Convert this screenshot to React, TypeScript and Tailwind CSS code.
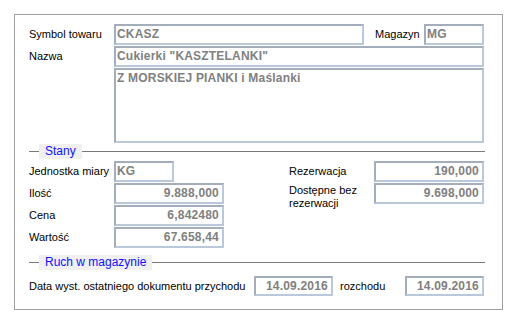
import type { ReactNode } from 'react'

const FONT = { fontFamily: '"Liberation Sans", Arial, sans-serif' }

function Box({ w, h = 'h-[21px]', right, children }: { w: string; h?: string; right?: boolean; children?: ReactNode }) {
  return (
    <div
      className={`${w} ${h} shrink-0 border-2 border-[#b9c8da] border-t-[#a3adbb] border-l-[#a3adbb] bg-white text-[12px] font-bold text-[#808080] leading-[17px] px-[1px] tracking-[0.2px] ${right ? 'text-right pr-[3px]' : ''}`}
    >
      {children}
    </div>
  )
}

function Legend({ title }: { title: string }) {
  return (
    <div className="flex items-center h-[15px]">
      <div className="w-[10px] h-px bg-[#7a7a7a]" />
      <div className="h-[15px] bg-[#f0f0f0] px-[6px] text-[12px] leading-[15px] text-[#1010ff]">{title}</div>
      <div className="flex-1 h-px bg-[#7a7a7a]" />
    </div>
  )
}

export default function App() {
  return (
    <div className="w-[516px] h-[329px] bg-white text-[11px] text-black" style={FONT}>
      <div className="absolute left-[14px] top-[14px] w-[489px] h-[296px] border border-[#a0a0a0] pl-[14px] pr-[17px] pt-[9px]">
        {/* naglowek */}
        <div className="flex items-center">
          <div className="w-[85px]">Symbol towaru</div>
          <Box w="w-[250px]">CKASZ</Box>
          <div className="w-[60px] pl-[11px]">Magazyn</div>
          <Box w="w-[60px]">MG</Box>
        </div>
        <div className="flex items-center mt-px">
          <div className="w-[85px]">Nazwa</div>
          <Box w="w-[370px]">Cukierki "KASZTELANKI"</Box>
        </div>
        <div className="flex mt-px">
          <div className="w-[85px]" />
          <Box w="w-[370px]" h="h-[75px]">Z MORSKIEJ PIANKI i Maślanki</Box>
        </div>

        {/* stany */}
        <div className="mt-px">
          <Legend title="Stany" />
        </div>
        <div className="flex mt-[2px]">
          <div className="w-[260px] flex flex-col gap-px">
            <div className="flex items-center">
              <div className="w-[85px]">Jednostka miary</div>
              <Box w="w-[60px]">KG</Box>
            </div>
            <div className="flex items-center">
              <div className="w-[85px]">Ilość</div>
              <Box w="w-[110px]" right>9.888,000</Box>
            </div>
            <div className="flex items-center">
              <div className="w-[85px]">Cena</div>
              <Box w="w-[110px]" right>6,842480</Box>
            </div>
            <div className="flex items-center">
              <div className="w-[85px]">Wartość</div>
              <Box w="w-[110px]" right>67.658,44</Box>
            </div>
          </div>
          <div className="flex flex-col gap-px">
            <div className="flex items-center">
              <div className="w-[85px]">Rezerwacja</div>
              <Box w="w-[110px]" right>190,000</Box>
            </div>
            <div className="flex items-start">
              <div className="w-[85px] leading-[13px] pt-[1px]">Dostępne bez<br />rezerwacji</div>
              <Box w="w-[110px]" right>9.698,000</Box>
            </div>
          </div>
        </div>

        {/* ruch */}
        <div className="mt-[7px]">
          <Legend title="Ruch w magazynie" />
        </div>
        <div className="flex items-center mt-[6px]">
          <div className="w-[225px]">Data wyst. ostatniego dokumentu przychodu</div>
          <Box w="w-[79px]" h="h-[20px]" right>14.09.2016</Box>
          <div className="w-[72px] pl-[7px]">rozchodu</div>
          <Box w="w-[79px]" h="h-[20px]" right>14.09.2016</Box>
        </div>
      </div>
    </div>
  )
}
